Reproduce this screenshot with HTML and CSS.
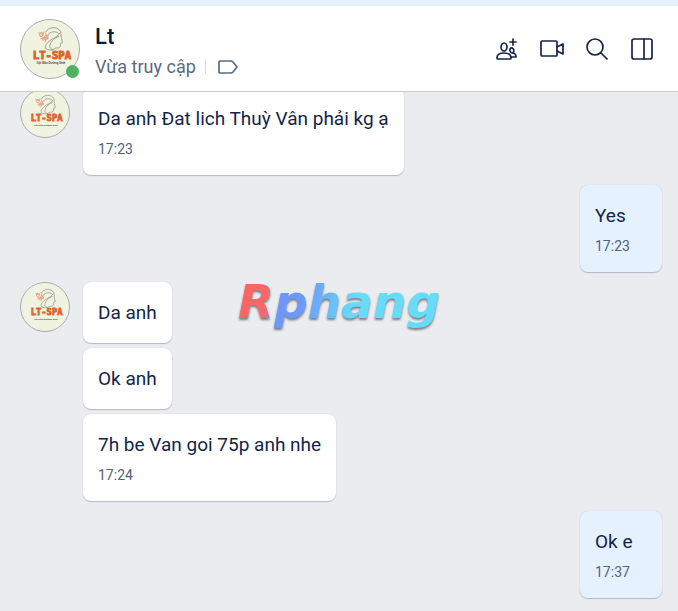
FILE: index.html
```
<!DOCTYPE html>
<html lang="vi">
<head>
  <meta charset="UTF-8">
  <meta name="viewport" content="width=device-width, initial-scale=1.0">
  <title>Lt</title>
  <link rel="stylesheet" href="styles.css">
</head>
<body>
  <svg class="sprite" aria-hidden="true">
    <symbol id="spa-head" viewBox="0 0 60 60">
      <g fill="none" stroke="#77796f" stroke-width=".7" stroke-linecap="round">
        <path d="M26 12c2-5 12-6 15 0 1 3 0 6 1 8l1 3-2 1c0 4-1 5-4 5-2 0-3 1-4 2"/>
        <path d="M40 14c-2 4-8 5-11 8-3 3-5 5-3 8 2 1 4 1 7 1"/>
        <path d="M39 17c-4 1-8 5-9 9-1 2 0 3 3 5M28 15c2-3 8-4 11-1"/>
      </g>
      <g fill="none" stroke="#e69a76" stroke-width="1">
        <circle cx="21" cy="15" r="2"/>
        <circle cx="26" cy="18" r="2"/>
        <circle cx="23" cy="20" r="1"/>
        <path d="M18 13l4 2 2-3M20 19l6-1 3-3M25 23l1-5M28 20l-3-7"/>
      </g>
    </symbol>
  </svg>

  <div class="topbar"></div>

  <header class="header">
    <div class="header-avatar">
      <svg class="avatar avatar-large" viewBox="0 0 60 60">
        <use href="#spa-head"/>
        <text class="logo-name" x="32" y="40" text-anchor="middle">LT-SPA</text>
        <text class="logo-tagline" x="31" y="46" text-anchor="middle">Gội Đầu Dưỡng Sinh</text>
      </svg>
      <span class="online"></span>
    </div>
    <div class="info">
      <h1>Lt</h1>
      <div class="status">
        <span>Vừa truy cập</span>
        <span class="divider"></span>
        <button class="tag-btn" aria-label="Phân loại">
          <svg width="20" height="14" viewBox="0 0 20 14"><path d="M2 1h11q1 0 2 1l4 5-4 5q-1 1-2 1H2q-1 0-1-1V2q0-1 1-1z"/></svg>
        </button>
      </div>
    </div>
    <div class="actions">
      <button aria-label="Thêm bạn vào nhóm">
        <svg viewBox="0 0 24 24"><path d="M18 2v6M15 5h6"/><ellipse cx="9" cy="10" rx="3" ry="4"/><path d="M2 21c0-3 2-5 7-5s7 2 7 5q0 1-1 1H3q-1 0-1-1zM16 11c3-1 4 5 1 5-2 0-3-4-1-5zM17 16c3 0 4 2 4 4h-5"/></svg>
      </button>
      <button aria-label="Gọi video">
        <svg viewBox="0 0 24 24"><rect x="1" y="4" width="16" height="15" rx="1"/><path d="M17 10l6-3v10l-6-3"/></svg>
      </button>
      <button aria-label="Tìm kiếm">
        <svg viewBox="0 0 24 24"><circle cx="10" cy="10" r="8"/><path d="M16 16l6 6"/></svg>
      </button>
      <button aria-label="Thông tin hội thoại">
        <svg viewBox="0 0 24 24"><rect x="2" y="2" width="20" height="20" rx="2"/><path d="M14 2v20"/></svg>
      </button>
    </div>
  </header>

  <main class="chat">
    <div class="group">
      <svg class="avatar" viewBox="0 0 60 60">
        <use href="#spa-head"/>
        <text class="logo-name" x="32" y="40" text-anchor="middle">LT-SPA</text>
        <text class="logo-tagline" x="31" y="46" text-anchor="middle">Gội Đầu Dưỡng Sinh</text>
      </svg>
      <div class="messages">
        <div class="bubble">
          <p>Da anh Đat lich Thuỳ Vân phải kg ạ</p>
          <time>17:23</time>
        </div>
      </div>
    </div>

    <div class="group me">
      <div class="messages">
        <div class="bubble">
          <p>Yes</p>
          <time>17:23</time>
        </div>
      </div>
    </div>

    <div class="group">
      <svg class="avatar" viewBox="0 0 60 60">
        <use href="#spa-head"/>
        <text class="logo-name" x="32" y="40" text-anchor="middle">LT-SPA</text>
        <text class="logo-tagline" x="31" y="46" text-anchor="middle">Gội Đầu Dưỡng Sinh</text>
      </svg>
      <div class="messages">
        <div class="bubble"><p>Da anh</p></div>
        <div class="bubble"><p>Ok anh</p></div>
        <div class="bubble">
          <p>7h be Van goi 75p anh nhe</p>
          <time>17:24</time>
        </div>
      </div>
    </div>

    <div class="group me">
      <div class="messages">
        <div class="bubble">
          <p>Ok e</p>
          <time>17:37</time>
        </div>
      </div>
    </div>
  </main>

  <div class="watermark"><span>Rphang</span></div>
</body>
</html>
```
FILE: styles.css
```
* {
  box-sizing: border-box;
}

body {
  margin: 0;
  min-height: 100vh;
  position: relative;
  background: #ebecf0;
  color: #13254a;
  font-family: Roboto, "Noto Sans", sans-serif;
}

h1,
p {
  margin: 0;
}

button {
  display: flex;
  padding: 0;
  border: none;
  background: none;
  color: inherit;
  cursor: pointer;
}

button svg {
  fill: none;
  stroke: currentColor;
  stroke-width: 1.7;
  stroke-linecap: round;
  stroke-linejoin: round;
}

.sprite {
  position: absolute;
  width: 0;
  height: 0;
}

.topbar {
  height: 6px;
  background: #e5f1ff;
}

/* header */
.header {
  position: relative;
  z-index: 1;
  display: flex;
  align-items: center;
  height: 86px;
  padding: 0 24px 0 20px;
  background: #fff;
  border-bottom: 1px solid #c9ccd3;
}

.avatar {
  display: block;
  flex: none;
  width: 50px;
  height: 50px;
  border: 1px solid #a9acb3;
  border-radius: 50%;
  background: #f0f3e0;
}

.avatar-large {
  width: 60px;
  height: 60px;
}

.logo-name {
  font: bold 11px/1 "DejaVu Sans Mono", monospace;
  fill: #e0632c;
  stroke: #e0632c;
  stroke-width: 1;
}

.logo-tagline {
  font: bold 3px/1 "Liberation Sans", sans-serif;
  fill: #44463e;
}

.header-avatar {
  position: relative;
}

.online {
  position: absolute;
  right: 1px;
  bottom: 1px;
  width: 13px;
  height: 13px;
  border-radius: 50%;
  background: #4eb35e;
}

.info {
  flex: 1;
  margin-left: 15px;
  padding-top: 4px;
}

.info h1 {
  font-size: 22px;
  line-height: 32px;
  font-weight: 500;
  color: #081b3a;
}

.status {
  display: flex;
  align-items: center;
  font-size: 18px;
  line-height: 28px;
  color: #5a6981;
}

.divider {
  width: 1px;
  height: 15px;
  margin: 0 12px 0 9px;
  background: #d6dbe1;
}

.actions {
  display: flex;
  gap: 21px;
}

.actions svg {
  width: 24px;
  height: 24px;
}

/* the list is scrolled slightly under the header */
.chat {
  display: flex;
  flex-direction: column;
  gap: 10px;
  margin-top: -4px;
  padding: 0 16px 12px 20px;
}

.group {
  display: flex;
  align-items: flex-start;
  gap: 13px;
}

.group.me {
  justify-content: flex-end;
}

.messages {
  display: flex;
  flex-direction: column;
  align-items: flex-start;
  gap: 5px;
}

.bubble {
  min-width: 82px;
  padding: 16px 15px;
  border-radius: 8px;
  background: #fff;
  box-shadow: 0 1px 1px #b4b9c7, 0 0 1px #c4c8d2;
}

.me .bubble {
  background: #e5f1ff;
}

.bubble p {
  font-size: 19px;
  line-height: 29px;
}

.bubble time {
  display: block;
  margin-top: 7px;
  font-size: 14px;
  line-height: 19px;
  color: #53627c;
}

.watermark {
  position: absolute;
  top: 274px;
  left: 0;
  right: 0;
  text-align: center;
  pointer-events: none;
  filter: drop-shadow(0 2px 1px #777c86);
}

.watermark span {
  font: italic bold 47px/56px "DejaVu Sans", sans-serif;
  color: transparent;
  background: linear-gradient(100deg, #fa6666 15%, #6c98fa 21%, #6c98fa 32%, #67dcf8 58%);
  -webkit-background-clip: text;
  background-clip: text;
}
```
